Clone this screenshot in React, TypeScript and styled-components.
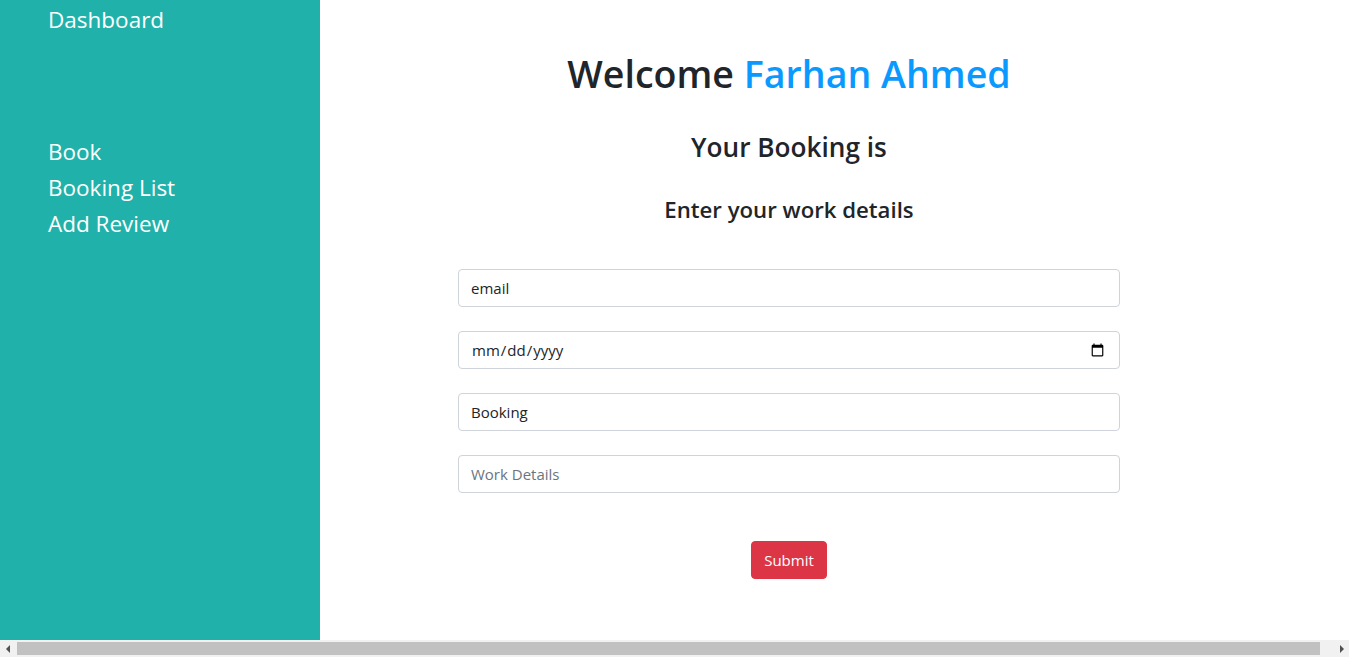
import React from "react";
import styled, { createGlobalStyle } from "styled-components";

const GlobalStyle = createGlobalStyle`
  html, body { margin: 0; padding: 0; }
  body {
    font-family: "Open Sans", "Noto Sans", sans-serif;
    color: #212529;
    background: #fff;
    overflow: hidden;
  }
  * { box-sizing: border-box; }
`;

const Page = styled.div`
  display: flex;
  width: 100%;
  height: 640px;
`;

const Sidebar = styled.nav`
  width: 320px;
  flex: 0 0 320px;
  background: lightseagreen;
  padding: 2px 0 0 48px;
  display: flex;
  flex-direction: column;
`;

const NavItem = styled.a<{ $gapAfter?: boolean }>`
  color: #fff;
  font-size: 22.5px;
  line-height: 36px;
  text-decoration: none;
  margin-bottom: ${(p) => (p.$gapAfter ? "96px" : "0")};
`;

const Main = styled.main`
  flex: 1;
  display: flex;
  flex-direction: column;
  align-items: center;
  padding: 50px 91px 0 0;
`;

const Title = styled.h1`
  margin: 0;
  font-size: 37.6px;
  line-height: 48px;
  font-weight: 600;
`;

const Name = styled.span`
  color: #0a99ff;
`;

const SubTitle = styled.h3`
  margin: 32px 0 0;
  font-size: 26.2px;
  line-height: 34px;
  font-weight: 600;
`;

const SmallTitle = styled.h4`
  margin: 31px 0 0;
  font-size: 22.2px;
  line-height: 29px;
  font-weight: 600;
`;

const Form = styled.form`
  width: 662px;
  margin-top: 45px;
  display: flex;
  flex-direction: column;
  gap: 24px;
`;

const Input = styled.input`
  display: block;
  width: 100%;
  height: 38px;
  padding: 6px 12px;
  font-family: inherit;
  font-size: 15px;
  line-height: 24px;
  color: #212529;
  background: #fff;
  border: 1px solid #ced4da;
  border-radius: 4px;
  outline: none;
  &::placeholder { color: #6c757d; }
`;

const ButtonRow = styled.div`
  display: flex;
  justify-content: center;
  margin-top: 24px;
`;

const SubmitButton = styled.button`
  height: 38px;
  padding: 6px 12px;
  font-family: inherit;
  font-size: 15px;
  line-height: 24px;
  color: #fff;
  background: #dc3545;
  border: 1px solid #dc3545;
  border-radius: 4px;
  cursor: pointer;
`;

/* Browser horizontal scrollbar drawn over the bottom of the viewport */
const ScrollBar = styled.div`
  position: fixed;
  left: 0;
  right: 0;
  bottom: 0;
  height: 17px;
  background: #f1f1f1;
  display: flex;
  align-items: center;
`;

const ScrollArrow = styled.div<{ $dir: "left" | "right" }>`
  flex: 0 0 17px;
  height: 17px;
  display: flex;
  align-items: center;
  justify-content: center;
  &::after {
    content: "";
    width: 0;
    height: 0;
    border-top: 4px solid transparent;
    border-bottom: 4px solid transparent;
    ${(p) =>
      p.$dir === "left"
        ? "border-right: 4px solid #505050; margin-left: -2px;"
        : "border-left: 4px solid #505050; margin-left: 2px;"}
  }
`;

const ScrollTrack = styled.div`
  flex: 1;
  height: 13px;
  display: flex;
`;

const ScrollThumb = styled.div`
  background: #c1c1c1;
  height: 100%;
`;

export default function App() {
  const thumbPct = 99.1;
  return (
    <>
      <GlobalStyle />
      <Page>
        <Sidebar>
          <NavItem href="#" $gapAfter>Dashboard</NavItem>
          <NavItem href="#">Book</NavItem>
          <NavItem href="#">Booking List</NavItem>
          <NavItem href="#">Add Review</NavItem>
        </Sidebar>
        <Main>
          <Title>
            Welcome <Name>Farhan Ahmed</Name>
          </Title>
          <SubTitle>Your Booking is</SubTitle>
          <SmallTitle>Enter your work details</SmallTitle>
          <Form onSubmit={(e) => e.preventDefault()}>
            <Input type="text" defaultValue="email" />
            <Input type="date" />
            <Input type="text" defaultValue="Booking" />
            <Input type="text" placeholder="Work Details" />
            <ButtonRow>
              <SubmitButton type="submit">Submit</SubmitButton>
            </ButtonRow>
          </Form>
        </Main>
      </Page>
      <ScrollBar>
        <ScrollArrow $dir="left" />
        <ScrollTrack>
          <ScrollThumb style={{ width: `${thumbPct}%` }} />
        </ScrollTrack>
        <ScrollArrow $dir="right" />
      </ScrollBar>
    </>
  );
}
